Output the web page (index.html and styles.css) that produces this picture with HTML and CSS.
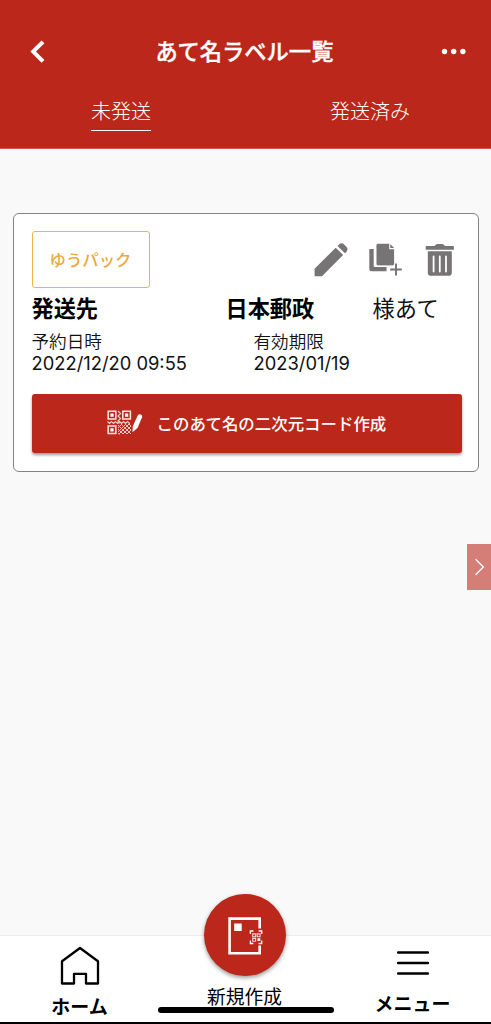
FILE: index.html
```html
<!DOCTYPE html>
<html lang="ja">
<head>
<meta charset="utf-8">
<meta name="viewport" content="width=device-width, initial-scale=1">
<title>あて名ラベル一覧</title>
<link rel="stylesheet" href="styles.css">
</head>
<body>
<div class="app">
  <header class="header">
    <div class="titlebar">
      <svg class="back" width="16" height="24" viewBox="0 0 16 24"><path d="M14 2.8 4.2 12.6l9.800 9.800" fill="none" stroke="#fff" stroke-width="4"/></svg>
      <h1 class="title">あて名ラベル一覧</h1>
      <svg class="more" width="26" height="8" viewBox="0 0 26 8" fill="#fff"><circle cx="3.5" cy="4.5" r="2.7"/><circle cx="12.7" cy="4.5" r="2.7"/><circle cx="21.9" cy="4.5" r="2.7"/></svg>
    </div>
    <nav class="tabs">
      <span class="tab tab-active">未発送</span>
      <span class="tab">発送済み</span>
    </nav>
  </header>

  <main class="content">
    <article class="card">
      <div class="card-top">
        <span class="badge">ゆうパック</span>
        <div class="actions">
          <svg width="34" height="34" viewBox="0 0 34 34" fill="#777475"><path d="M.6 33.2v-7.4L21.7 4.7l7.4 7.4L8 33.2zM23.5 2.9l1.5-1.5c1.5-1.5 3.6-1.5 5.1 0l2.3 2.3c1.5 1.5 1.5 3.6 0 5.1l-1.5 1.5z"/></svg>
          <svg width="34" height="34" viewBox="0 0 34 34"><path d="M2.5 6v20h15" fill="none" stroke="#777475" stroke-width="4.4" stroke-linejoin="round"/><path d="M9 .8h11.2v5.4h4.9v14.600q0 1.600-1.600 1.600H9q-1.600 0-1.600-1.600V2.400Q7.400.8 9 .8zM21.300 1l3.800 4.100h-3.800z" fill="#777475"/><path d="M6.500 5v18.300H24" fill="none" stroke="#fff" stroke-width="1.300"/><path d="M27 20.500v12M21.200 26.500h11.600" fill="none" stroke="#777475" stroke-width="1.900"/></svg>
          <svg width="30" height="34" viewBox="0 0 30 34"><path d="M1.3 3h8.300q1-2 3-2h4.300q2 0 3 2h8.300q.7 0 .7.700v3.100H.7V3.700q0-.7.600-.7z" fill="#777475"/><path d="M2.800 8.200h24v21.200q0 3.400-3.400 3.400H6.200q-3.400 0-3.400-3.400z" fill="#777475"/><path d="M8.600 13.500v15M14.800 13.500v15M21 13.500v15" stroke="#fff" stroke-width="1.800" stroke-linecap="round"/></svg>
        </div>
      </div>
      <div class="recipient">
        <strong class="recipient-label">発送先</strong>
        <strong class="recipient-name">日本郵政</strong>
        <span>様あて</span>
      </div>
      <dl class="dates">
        <div><dt>予約日時</dt><dd>2022/12/20 09:55</dd></div>
        <div><dt>有効期限</dt><dd>2023/01/19</dd></div>
      </dl>
      <button class="create" type="button">
        <svg width="36" height="26" viewBox="0 0 36 26">
          <g fill="none" stroke="#fbe6e3" stroke-width="1.5"><path d="M1.200 1.300h7.600v7.600H1.200zM15.800 1.300h7.600v7.600h-7.600zM1.200 16h7.600v7.600H1.200z"/></g>
          <path d="M3.400 3.500h3.200v3.200H3.400zM18 3.500h3.200v3.200H18zM3.400 18.200h3.200v3.200H3.400z" fill="#fff"/>
          <g fill="none" stroke="#f3cbc6" stroke-width="1.2"><path d="m11 1 2.500 2.500L11 6l2.500 2.500L11 11l1.500 2.500M.5 11.500 2.500 13.500l2-2 2 2 2-2 2 2 2-2 2 2 2-2 2 2 2-2 2 2"/><path d="m11 15 9 9m-9-5 5 5m-5-1 1.500 1.500M14 14l10 10m-6-10 6 6m-2-6 2 2M11 18l4-4m-4 8 8-8m-7 10 11-11m-7 11 8-8m-4 8 4-4" stroke-width="1"/></g>
          <path d="M25.400 22.300 25.800 16.300 30.700 5.500q1-1.800 3-1t1.400 2.800L30.500 18z" fill="#fff"/>
        </svg>
        <span>このあて名の二次元コード作成</span>
      </button>
    </article>
  </main>

  <div class="drawer"><svg width="12" height="18" viewBox="0 0 12 18"><path d="m1.6 1.3 7.800 7.700-7.800 7.700" fill="none" stroke="#fff" stroke-width="1.3"/></svg></div>

  <footer class="footer">
    <div class="item item-home">
      <svg width="40" height="40" viewBox="0 0 40 40"><path d="M2 37.500V15.200L20 2l18 13.200v22.300H26v-9.600H14v9.600z" fill="none" stroke="#000" stroke-width="2.3" stroke-linejoin="round"/></svg>
      <span class="label-bold">ホーム</span>
    </div>
    <div class="item item-new">
      <div class="fab">
        <svg width="40" height="40" viewBox="0 0 40 40">
          <path d="M34.700 13.500V3.600H4.600v34.700h30.100v-7.800" fill="none" stroke="#fff" stroke-width="2.6"/>
          <path d="M9.200 8.500h7.500v7.500H9.200z" fill="#fff"/>
          <g fill="none" stroke="#fff" stroke-width="1.3"><path d="M25.400 19v-3h3M33.600 16h3.100v3M25.400 25.500v3h3M33.600 28.500h3.100v-3"/><path d="M27.700 18.900h2.900v2.900h-2.900zM32.200 18.900h2.900v2.900h-2.900zM27.700 23.400h2.900v2.900h-2.900z" stroke="#f6d3cf" stroke-width="1.1"/></g>
          <path d="M32.500 23.200h2.800v2.800h-2.800z" fill="#fff"/>
        </svg>
      </div>
      <span class="label-new">新規作成</span>
    </div>
    <div class="item item-menu">
      <svg width="32" height="26" viewBox="0 0 32 26"><path d="M1 2.500h30M1 13h30M1 23.500h30" stroke="#000" stroke-width="2.3" stroke-linecap="round"/></svg>
      <span class="label-bold">メニュー</span>
    </div>
    <div class="home-indicator"></div>
  </footer>
</div>
</body>
</html>
```
FILE: styles.css
```css
* { box-sizing: border-box; }

body {
  margin: 0;
  background: #f9f9f9;
  color: #111;
  font-family: "Noto Sans CJK JP", "Noto Sans", sans-serif;
}

.app {
  position: relative;
  display: flex;
  flex-direction: column;
  height: 1024px;
  overflow: hidden;
}

.header {
  height: 149px;
  padding-top: 35px;
  background: #bb271b;
  border-bottom: 1px solid #c9584e;
  color: #fff;
}

.titlebar {
  display: flex;
  align-items: center;
  justify-content: space-between;
  height: 32px;
  padding: 0 24px 0 29px;
}

.title {
  margin: 0;
  padding: 0 0 2px 3px;
  font-size: 22.3px;
  line-height: 32px;
  font-weight: 500;
  -webkit-text-stroke: .35px #fff;
}

.tabs {
  display: flex;
  gap: 179px;
  padding: 27px 0 0 91px;
}

.tab {
  height: 37px;
  font-size: 20px;
  line-height: 33px;
  font-weight: 300;
}

.tab-active { border-bottom: 1px solid #fff; }

.content {
  flex: 1;
  padding: 64px 12px 0 12.5px;
}

.card {
  height: 259px;
  padding: 17px 17px 0 18px;
  background: #fff;
  border: 1px solid #828282;
  border-radius: 6px;
}

.card-top {
  display: flex;
  justify-content: space-between;
}

.badge {
  width: 118px;
  height: 57px;
  border: 1.5px solid #efb449;
  border-radius: 3px;
  color: #eda93d;
  font-size: 16.4px;
  line-height: 54px;
  font-weight: 500;
  text-align: center;
}

.actions {
  display: flex;
  gap: 21px;
  padding: 12px 6px 0 0;
}

.actions svg:nth-child(2) { margin: 0 1px 0 -1px; }
.actions svg:first-child { margin-right: 1px; }

.recipient {
  display: flex;
  height: 32px;
  margin-top: 3px;
  font-size: 22.2px;
  line-height: 32px;
}

.recipient strong { color: #000; }
.recipient-label { width: 194px; }
.recipient-name { width: 147px; }

.dates {
  display: grid;
  grid-template-columns: 222px 1fr;
  margin: 7px 0 0;
}

.dates dt {
  font-size: 17.6px;
  line-height: 22px;
  font-weight: 350;
}

.dates dd {
  margin: 0;
  font: 18.35px/22px Inter, sans-serif;
}

.create {
  display: flex;
  align-items: center;
  gap: 14px;
  width: 430px;
  height: 59px;
  margin-top: 20px;
  padding: 0 0 1px 75px;
  border: 0;
  border-radius: 3px;
  background: #bb271b;
  box-shadow: 0 2px 3px rgba(0, 0, 0, .4);
  color: #fff;
  font: 500 16.45px/24px "Noto Sans CJK JP", sans-serif;
}

.drawer {
  position: absolute;
  top: 544px;
  right: 0;
  display: flex;
  align-items: center;
  justify-content: center;
  width: 24.5px;
  height: 46px;
  padding-left: 2px;
  background: #d57e78;
}

.footer {
  position: relative;
  display: grid;
  grid-template-columns: 159px 171px 1fr;
  height: 89px;
  background: #fff;
  border-top: 1px solid #ededed;
  border-bottom: 2px solid #000;
  color: #000;
}

.item {
  display: flex;
  flex-direction: column;
  align-items: center;
}

.item-home { padding-top: 10px; }
.item-home .label-bold { margin-top: 7px; }
.item-menu { padding: 14px 0 0 4px; }
.item-menu .label-bold { margin-top: 14px; }

.label-bold {
  font-size: 19px;
  line-height: 26px;
  font-weight: 700;
}

.label-new {
  margin-top: 7px;
  font-size: 18.8px;
  line-height: 26px;
}

.fab {
  display: flex;
  align-items: center;
  justify-content: center;
  width: 82px;
  height: 82px;
  margin-top: -42px;
  border-radius: 50%;
  background: #bb271b;
  box-shadow: 0 2px 4px rgba(0, 0, 0, .4);
}

.home-indicator {
  position: absolute;
  left: 158px;
  bottom: 9px;
  width: 176px;
  height: 6px;
  border-radius: 3px;
  background: #000;
}
```
